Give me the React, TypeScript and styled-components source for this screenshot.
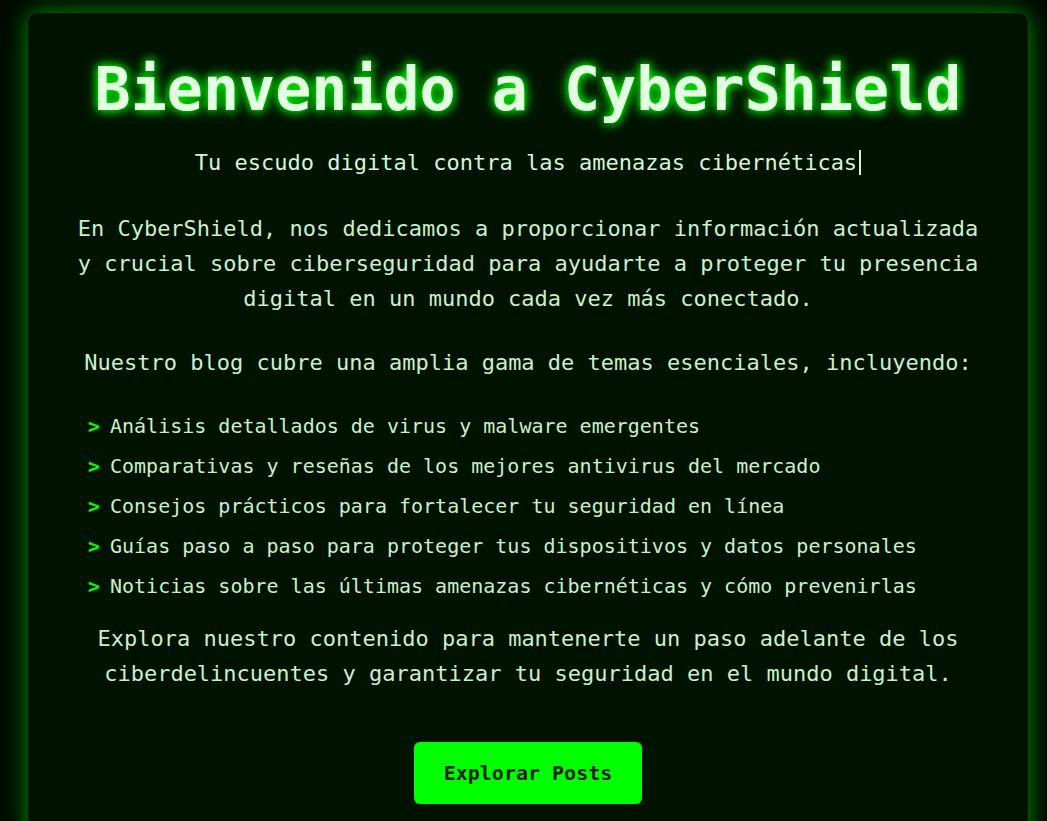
import React from "react";
import styled, { createGlobalStyle } from "styled-components";

const Global = createGlobalStyle`
  html, body {
    margin: 0;
    padding: 0;
    background: #000a00;
  }
  body {
    font-family: "DejaVu Sans Mono", "Liberation Mono", monospace;
    color: #cdeecd;
  }
`;

const Page = styled.div`
  padding: 13px 0 40px 28px;
  min-height: 821px;
  box-sizing: border-box;
`;

const Card = styled.section`
  width: 1000px;
  box-sizing: border-box;
  background: #001200;
  border-radius: 10px;
  padding: 40px 40px 40px;
  box-shadow: 0 0 20px rgba(0, 255, 0, 0.45), 0 0 40px rgba(0, 200, 0, 0.2);
  text-align: center;
`;

const Title = styled.h1`
  margin: 0 0 20px;
  font-size: 60px;
  line-height: 72px;
  font-weight: 700;
  color: #e2ffe2;
  text-shadow: 0 0 8px #00ff00, 0 0 14px #00cc00;
  letter-spacing: 0;
`;

const Subtitle = styled.p`
  margin: 0 0 31px;
  font-size: 22px;
  line-height: 35px;
  color: #d6f5d6;
`;

const Typed = styled.span`
  border-right: 2px solid #d6f5d6;
  padding-right: 2px;
`;

const Para = styled.p<{ $gap: number }>`
  margin: 0 0 ${(p) => p.$gap}px;
  font-size: 22px;
  line-height: 35px;
  color: #cdeecd;
`;

const List = styled.ul`
  list-style: none;
  margin: 0 0 19px;
  padding: 0 0 0 20px;
  display: flex;
  flex-direction: column;
  gap: 8px;
  text-align: left;
`;

const Item = styled.li`
  display: flex;
  align-items: center;
  font-size: 20px;
  line-height: 32px;
  color: #cdeecd;
`;

const Arrow = styled.span`
  width: 22px;
  flex: none;
  color: #00ff00;
  font-weight: 700;
`;

const ButtonRow = styled.div`
  display: flex;
  justify-content: center;
  margin-top: 51px;
`;

const Button = styled.button`
  background: #00ff00;
  color: #002200;
  border: none;
  border-radius: 6px;
  padding: 0 30px;
  height: 62px;
  font-family: "DejaVu Sans Mono", "Liberation Mono", monospace;
  font-size: 20px;
  font-weight: 700;
  cursor: pointer;
`;

const items = [
  "Análisis detallados de virus y malware emergentes",
  "Comparativas y reseñas de los mejores antivirus del mercado",
  "Consejos prácticos para fortalecer tu seguridad en línea",
  "Guías paso a paso para proteger tus dispositivos y datos personales",
  "Noticias sobre las últimas amenazas cibernéticas y cómo prevenirlas",
];

export default function App() {
  return (
    <>
      <Global />
      <Page>
        <Card>
          <Title>Bienvenido a CyberShield</Title>
          <Subtitle>
            <Typed>Tu escudo digital contra las amenazas cibernéticas</Typed>
          </Subtitle>
          <Para $gap={29}>
            En CyberShield, nos dedicamos a proporcionar información actualizada y crucial sobre
            ciberseguridad para ayudarte a proteger tu presencia digital en un mundo cada vez más
            conectado.
          </Para>
          <Para $gap={30}>
            Nuestro blog cubre una amplia gama de temas esenciales, incluyendo:
          </Para>
          <List>
            {items.map((t) => (
              <Item key={t}>
                <Arrow>&gt;</Arrow>
                <span>{t}</span>
              </Item>
            ))}
          </List>
          <Para $gap={0}>
            Explora nuestro contenido para mantenerte un paso adelante de los ciberdelincuentes y
            garantizar tu seguridad en el mundo digital.
          </Para>
          <ButtonRow>
            <Button>Explorar Posts</Button>
          </ButtonRow>
        </Card>
      </Page>
    </>
  );
}
